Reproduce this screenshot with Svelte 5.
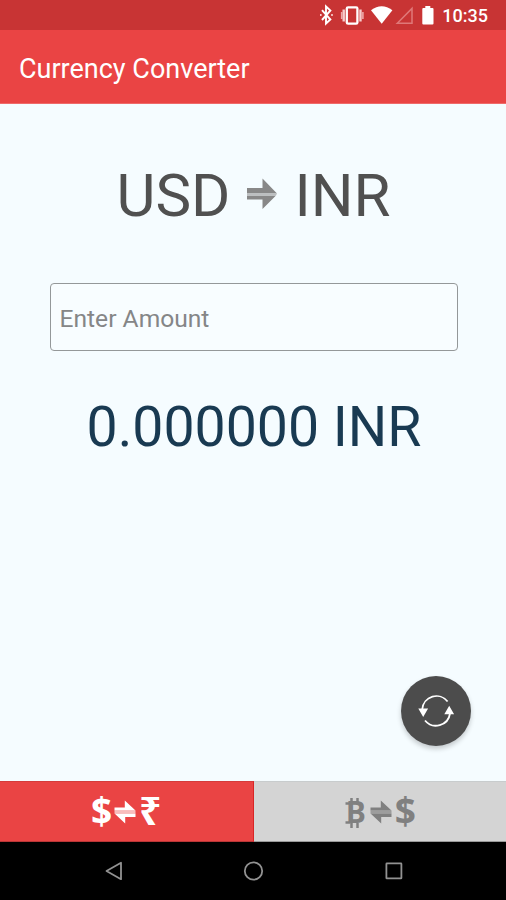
<script>
  let amount = $state('');
  let active = $state(0);

  const rate = 82.5;
  let result = $derived(((parseFloat(amount) || 0) * rate).toFixed(6));
</script>

<div class="screen">
  <div class="status">
    <svg class="status__icons" viewBox="0 0 120 30" width="120" height="30">
      <path d="M2 10.2l8.4 9.3-4.4 4V6.5l4.4 4L2 20" fill="none" stroke="#fff" stroke-width="1.9" />
      <path d="M0 15h1.6M11.2 15h1.6" stroke="#f8d0d0" stroke-width="1.8" />
      <rect x="26.8" y="7.3" width="10.6" height="16.4" rx="1.3" fill="none" stroke="#fff" stroke-width="2.3" />
      <path d="M23.7 9.5v12M40.5 9.5v12" stroke="#f7cccc" stroke-width="2.4" />
      <path d="M21.7 12v7M42.9 12v7" stroke="#eda9a9" stroke-width="1.6" />
      <path d="M51 10.2q10.7-8 21.4 0L61.7 23.8z" fill="#fff" />
      <path d="M77.3 23.2L92 8.4v14.8z" fill="none" stroke="#df7878" stroke-width="1.5" />
      <path d="M105.300 6h5v2h2.200q1 0 1 1v14.600q0 1-1 1h-9.200q-1 0-1-1V9q0-1 1-1h2z" fill="#fff" />
    </svg>
    <span class="status__time">10:35</span>
  </div>

  <header class="appbar"><h1>Currency Converter</h1></header>

  <main class="content">
    <div class="pair">
      <span>USD</span>
      <svg viewBox="0 0 32 32" width="32" height="32">
        <path d="M1 10h15.5V0.5L31 15.5H1z" fill="#888" />
        <path d="M1 17.5h29L16.5 31v-9.5H1z" fill="#888" />
        <path d="M1 15.5h30l-1 2H1z" fill="#bcbec0" />
      </svg>
      <span>INR</span>
    </div>

    <input class="amount" type="text" placeholder="Enter Amount" bind:value={amount} />

    <p class="result">{result} INR</p>

    <button class="fab" aria-label="Swap currencies">
      <svg viewBox="0 0 40 40" width="40" height="40">
        <g fill="none" stroke="#fff" stroke-width="1.8">
          <path d="M6.3 18A14.2 14.2 0 0 1 31.600 10.500" />
          <path d="M34 22.5A14.2 14.2 0 0 1 9 29.500" />
        </g>
        <path d="M2.3 17.5h9.800l-4.900 8.500zM28.3 23.3h9.800l-4.900-8.600z" fill="#fff" />
      </svg>
    </button>
  </main>

  {#snippet swap()}
    <svg class="swap" viewBox="0 0 22 24" width="22" height="24">
      <path d="M0.5 7.5h10.3V0.5L21.5 10.5H0.5z" />
      <path d="M0.5 13.5L11.2 23.5V17h10.3v-3.500z" />
      <path class="swap__mid" d="M0.5 10.500h21v3h-21z" />
    </svg>
  {/snippet}

  <div class="tabs">
    <button class="tab" class:tab--active={active === 0} onclick={() => (active = 0)}>
      <span class="dollar">$</span>{@render swap()}<span class="rupee">₹</span>
    </button>
    <button class="tab" class:tab--active={active === 1} onclick={() => (active = 1)}>
      <span class="btc">
        B
        <svg viewBox="0 0 22 30" width="22" height="30">
          <path d="M6.5 0v5M12.5 0v5M6.5 25v5M12.5 25v5" />
          <path d="M0.5 5.500h5M0.5 24.500h5" />
        </svg>
      </span>{@render swap()}<span class="dollar">$</span>
    </button>
  </div>

  <nav class="navbar">
    <svg viewBox="0 0 506 58" width="506" height="58">
      <g fill="none" stroke="#929292" stroke-width="1.8" stroke-linejoin="round">
        <path d="M106.500 29L121 20.800v16.400z" />
        <circle cx="253.500" cy="29" r="8.700" />
        <rect x="386.400" y="21.400" width="15" height="15" rx="0.500" />
      </g>
    </svg>
  </nav>
</div>

<style>
  :global(body) {
    margin: 0;
  }
  .screen {
    display: flex;
    flex-direction: column;
    width: 506px;
    height: 900px;
    overflow: hidden;
    background: #f5fcff;
    font-family: Roboto, 'Liberation Sans', sans-serif;
  }
  button {
    border: 0;
    padding: 0;
    cursor: pointer;
  }

  .status {
    display: flex;
    align-items: center;
    justify-content: flex-end;
    height: 30px;
    padding-right: 18px;
    background: #c83434;
    color: #fff;
  }
  .status__icons {
    margin-right: 2px;
  }
  .status__time {
    font-size: 18px;
    font-weight: 500;
    line-height: 30px;
    padding-top: 2px;
  }

  .appbar {
    display: flex;
    align-items: center;
    box-sizing: border-box;
    height: 74px;
    padding: 5px 0 0 19px;
    border-bottom: 1px solid #ef6a6a;
    background: #ea4444;
  }
  .appbar h1 {
    margin: 0;
    color: #fff;
    font-size: 27px;
    font-weight: 400;
  }

  .content {
    display: flex;
    flex-direction: column;
    flex: 1;
    align-items: center;
    position: relative;
  }
  .pair {
    display: flex;
    align-items: center;
    gap: 16px;
    height: 70px;
    margin: 56px 0 0 1px;
    color: #505050;
    font-size: 60px;
  }
  .pair svg {
    margin-top: -3px;
  }
  .amount {
    box-sizing: border-box;
    width: 408px;
    height: 68px;
    margin: 53px 0 0 1px;
    padding: 2px 9px 0;
    border: 1px solid #949899;
    border-radius: 4px;
    outline: 0;
    background: #f8fdff;
    color: #505050;
    font-family: inherit;
    font-size: 24.6px;
  }
  .amount::placeholder {
    color: #858687;
    opacity: 1;
  }
  .result {
    margin: 44px 0 0 2px;
    color: #193a52;
    font-size: 55.4px;
    line-height: 66px;
  }
  .fab {
    position: absolute;
    right: 35px;
    bottom: 35px;
    display: flex;
    align-items: center;
    justify-content: center;
    width: 70px;
    height: 70px;
    border-radius: 50%;
    background: #4c4c4c;
    box-shadow: 0 3px 5px rgba(0, 0, 0, 0.2);
  }

  .tabs {
    display: flex;
    height: 61px;
  }
  .tab {
    display: flex;
    align-items: center;
    justify-content: center;
    gap: 3px;
    flex: 1;
    box-sizing: border-box;
    border-top: 1px solid #c8cccd;
    border-bottom: 1px solid #999;
    background: #d4d4d4;
    color: #808080;
    font-family: 'Open Sans', 'Noto Sans', sans-serif;
    font-size: 37px;
    font-weight: 700;
    line-height: 56px;
  }
  .tab--active {
    border-right: 1px solid #d92525;
    border-top-color: #d43c3c;
    border-bottom-color: #b93636;
    background: #ea4444;
    color: #fff;
  }
  .dollar {
    width: 20px;
    padding-bottom: 2px;
  }
  .rupee {
    padding-bottom: 3px;
    font-size: 39px;
  }
  .btc {
    position: relative;
    width: 22px;
    font-size: 30px;
  }
  .btc svg {
    position: absolute;
    top: 14px;
    left: 0;
    fill: none;
    stroke: currentColor;
    stroke-width: 2.5;
  }
  .swap {
    fill: currentColor;
  }
  .swap__mid {
    opacity: 0.65;
  }

  .navbar {
    height: 58px;
    background: #000;
  }
  .navbar svg {
    display: block;
  }
</style>
